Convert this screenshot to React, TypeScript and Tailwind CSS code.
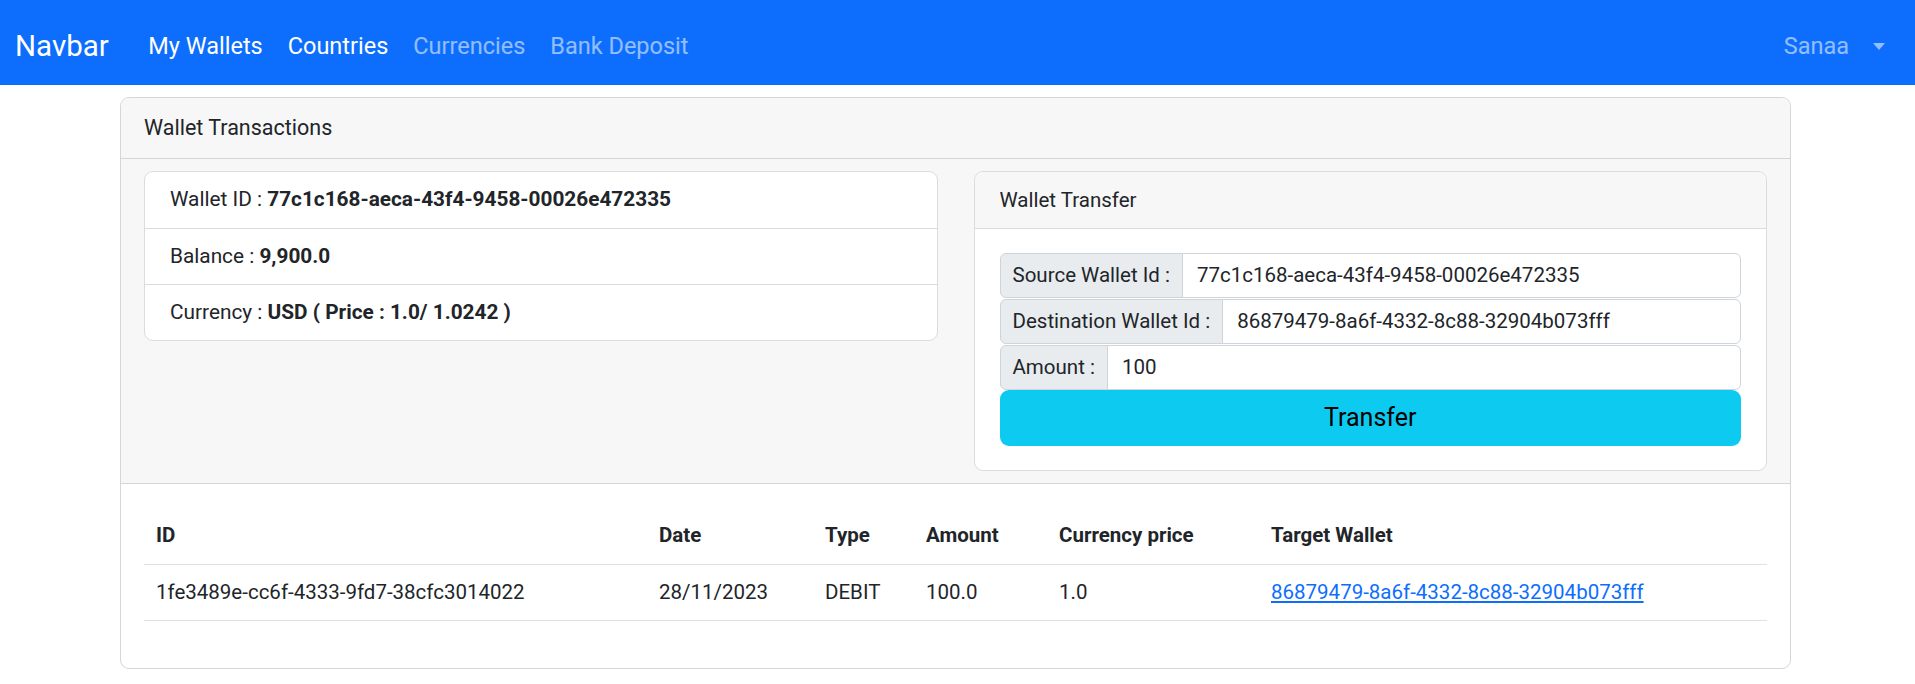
import React from "react";

const font = { fontFamily: '"Segoe UI", Roboto, "Noto Sans", sans-serif' };

function Navbar() {
  return (
    <nav className="flex h-[85px] items-center bg-[#0d6efd] pl-[15px] pr-[30px] pt-[8px] text-[23.5px]">
      <span className="mr-[27px] text-[29.5px] leading-none text-white">Navbar</span>
      <a className="px-[12.5px] text-white">My Wallets</a>
      <a className="px-[12.5px] text-white">Countries</a>
      <a className="px-[12.5px] text-white/55">Currencies</a>
      <a className="px-[12.5px] text-white/55">Bank Deposit</a>
      <div className="ml-auto flex items-center gap-[24px] text-white/55">
        <span>Sanaa</span>
        <span className="h-0 w-0 border-x-[6.5px] border-t-[7px] border-x-transparent border-t-white/55" />
      </div>
    </nav>
  );
}

function InfoList() {
  const rows: [string, string][] = [
    ["Wallet ID", "77c1c168-aeca-43f4-9458-00026e472335"],
    ["Balance", "9,900.0"],
    ["Currency", "USD ( Price : 1.0/ 1.0242 )"],
  ];
  return (
    <ul className="self-start rounded-[9px] border border-[#dcdcdc] bg-white text-[20.8px]">
      {rows.map(([k, v], i) => (
        <li
          key={k}
          className={`flex h-[56px] items-center px-[25px] ${i > 0 ? "border-t border-[#dcdcdc]" : ""}`}
        >
          {k} :&nbsp;<b className="font-bold">{v}</b>
        </li>
      ))}
    </ul>
  );
}

function Field({ label, value }: { label: string; value: string }) {
  return (
    <div className="mb-[1px] flex h-[45px] text-[20.5px]">
      <span className="flex items-center whitespace-nowrap rounded-l-[6px] border border-[#ced4da] bg-[#e9ecef] px-[12px]">
        {label}
      </span>
      <span className="-ml-px flex flex-1 items-center rounded-r-[6px] border border-[#ced4da] bg-white px-[14px]">
        {value}
      </span>
    </div>
  );
}

function TransferCard() {
  return (
    <div className="rounded-[9px] border border-[#dcdcdc] bg-white">
      <div className="flex h-[57px] items-center rounded-t-[9px] border-b border-[#dcdcdc] bg-[#f7f7f7] px-[25px] text-[20.5px]">
        Wallet Transfer
      </div>
      <div className="px-[25px] py-[24px]">
        <Field label="Source Wallet Id :" value="77c1c168-aeca-43f4-9458-00026e472335" />
        <Field label="Destination Wallet Id :" value="86879479-8a6f-4332-8c88-32904b073fff" />
        <Field label="Amount :" value="100" />
        <button className="-mt-px flex h-[56px] w-full items-center justify-center rounded-[9px] bg-[#0dcaf0] text-[25px] text-black">
          Transfer
        </button>
      </div>
    </div>
  );
}

function Transactions() {
  const cols = [
    { name: "ID", w: "w-[503px]" },
    { name: "Date", w: "w-[166px]" },
    { name: "Type", w: "w-[101px]" },
    { name: "Amount", w: "w-[133px]" },
    { name: "Currency price", w: "w-[212px]" },
    { name: "Target Wallet", w: "" },
  ];
  return (
    <table className="w-full table-fixed border-collapse text-left text-[20.5px]">
      <thead>
        <tr className="h-[56px] border-b border-[#dee2e6]">
          {cols.map((c) => (
            <th key={c.name} className={`${c.w} px-[12px] font-bold`}>
              {c.name}
            </th>
          ))}
        </tr>
      </thead>
      <tbody>
        <tr className="h-[56px] border-b border-[#dee2e6]">
          <td className="px-[12px]">1fe3489e-cc6f-4333-9fd7-38cfc3014022</td>
          <td className="px-[12px]">28/11/2023</td>
          <td className="px-[12px]">DEBIT</td>
          <td className="px-[12px]">100.0</td>
          <td className="px-[12px]">1.0</td>
          <td className="px-[12px]">
            <a className="text-[#0d6efd] underline">86879479-8a6f-4332-8c88-32904b073fff</a>
          </td>
        </tr>
      </tbody>
    </table>
  );
}

export default function App() {
  return (
    <div className="min-h-screen bg-white text-[#212529]" style={font}>
      <Navbar />
      <div className="ml-[120px] mt-[12px] w-[1671px] rounded-[9px] border border-[#d6d6d6]">
        <div className="flex h-[61px] items-center rounded-t-[9px] border-b border-[#d6d6d6] bg-[#f7f7f7] px-[23px] text-[21.5px]">
          Wallet Transactions
        </div>
        <div className="grid grid-cols-2 gap-[36px] border-b border-[#d6d6d6] bg-[#f7f7f7] px-[23px] py-[12px]">
          <InfoList />
          <TransferCard />
        </div>
        <div className="px-[23px] pb-[47px] pt-[24px]">
          <Transactions />
        </div>
      </div>
    </div>
  );
}
